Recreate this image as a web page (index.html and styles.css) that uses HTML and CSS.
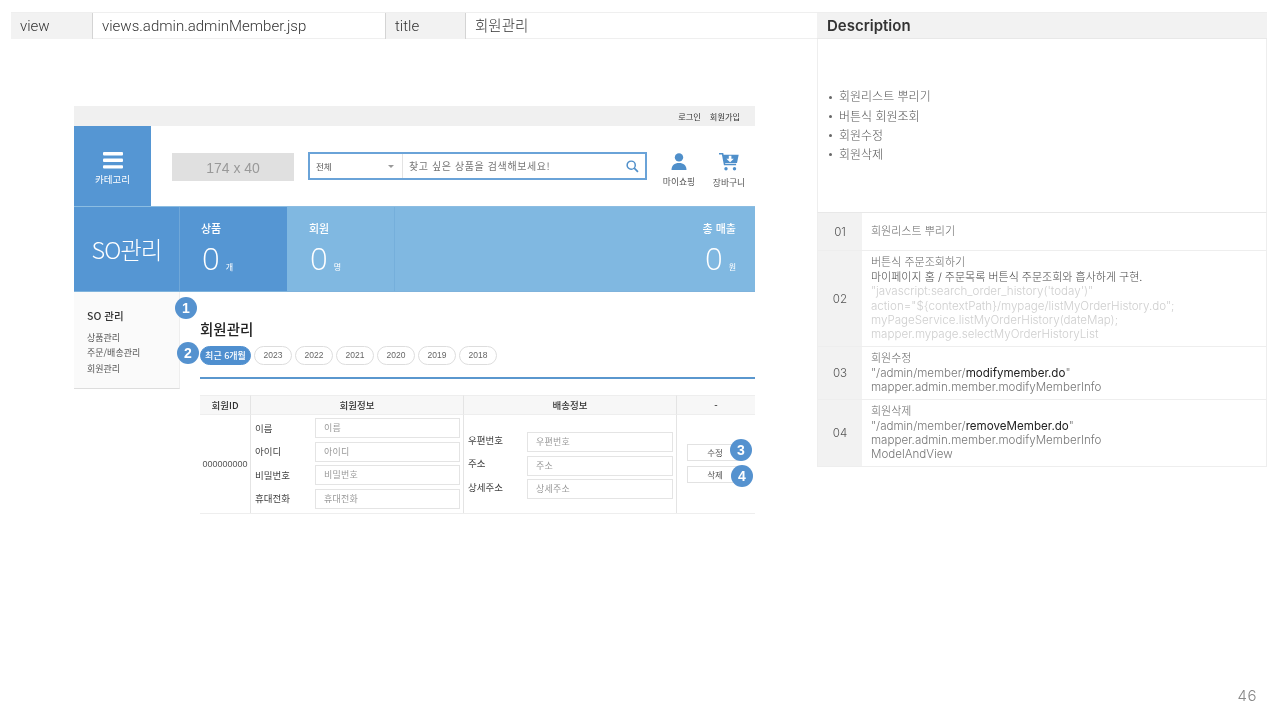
FILE: index.html
```html
<!DOCTYPE html>
<html lang="ko">
<head>
<meta charset="utf-8">
<title>회원관리</title>
<link rel="stylesheet" href="styles.css">
</head>
<body>
<div class="slide">
  <div class="columns">
    <main class="left">
      <div class="meta">
        <div class="meta-key">view</div>
        <div class="meta-val">views.admin.adminMember.jsp</div>
        <div class="meta-key">title</div>
        <div class="meta-val meta-ko">회원관리</div>
      </div>
      <section class="mock">
        <div class="topbar"><span>로그인</span><span>회원가입</span></div>
        <header class="head">
          <div class="cat">
            <svg class="burger" width="20" height="17" viewBox="0 0 20 17"><g fill="#fff"><rect width="20" height="3.4" rx="1"/><rect y="6.600" width="20" height="3.4" rx="1"/><rect y="13.200" width="20" height="3.4" rx="1"/></g></svg>
            <span>카테고리</span>
          </div>
          <div class="logo">174 x 40</div>
          <div class="search">
            <div class="sel"><span>전체</span><i class="caret"></i></div>
            <div class="query"><span>찾고 싶은 상품을 검색해보세요!</span>
              <svg width="13" height="13" viewBox="0 0 15 15"><circle cx="6" cy="6" r="4.7" fill="none" stroke="#4f8fca" stroke-width="1.7"/><path d="M9.5 9.5l4.3 4.3" stroke="#4f8fca" stroke-width="2" fill="none"/></svg>
            </div>
          </div>
          <div class="hicon hicon-my">
            <svg width="16" height="17" viewBox="0 0 16 17"><circle cx="8" cy="4.4" r="4.2" fill="#4f8fca"/><path d="M0.5 17c0-4.6 3-7 7.500-7s7.500 2.400 7.500 7z" fill="#4f8fca"/></svg>
            <span>마이쇼핑</span>
          </div>
          <div class="hicon hicon-cart">
            <svg width="20" height="18" viewBox="0 0 20 18"><path d="M0 0.800h3.600l2 10.700h11.500" fill="none" stroke="#4f8fca" stroke-width="1.600"/><path d="M3.800 1.800h15.900l-1.700 8.200H5.400z" fill="#4f8fca"/><path d="M9.800 2.800h2.600v3h2.400l-3.700 3.400-3.700-3.400h2.400z" fill="#fff"/><circle cx="7" cy="15.800" r="1.700" fill="#4f8fca"/><circle cx="15.500" cy="15.800" r="1.700" fill="#4f8fca"/></svg>
            <span>장바구니</span>
          </div>
        </header>
        <div class="stats">
          <div class="stat-title">SO관리</div>
          <div class="stat stat-dark">
            <div class="stat-label">상품</div>
            <div class="stat-num"><b>0</b><small>개</small></div>
          </div>
          <div class="stat stat-light">
            <div class="stat-label">회원</div>
            <div class="stat-num"><b>0</b><small>명</small></div>
          </div>
          <div class="stat stat-total">
            <div class="stat-label">총 매출</div>
            <div class="stat-num"><b>0</b><small>원</small></div>
          </div>
        </div>
        <div class="body">
          <aside class="side">
            <h3>SO 관리</h3>
            <ul>
              <li>상품관리</li>
              <li>주문/배송관리</li>
              <li>회원관리</li>
            </ul>
          </aside>
          <div class="content">
            <span class="badge badge-1">1</span>
            <span class="badge badge-2">2</span>
            <h2>회원관리</h2>
            <div class="tabs">
              <span class="tab on">최근 6개월</span>
              <span class="tab">2023</span>
              <span class="tab">2022</span>
              <span class="tab">2021</span>
              <span class="tab">2020</span>
              <span class="tab">2019</span>
              <span class="tab">2018</span>
            </div>
            <div class="rule"></div>
            <div class="tbl">
              <div class="th">회원ID</div>
              <div class="th">회원정보</div>
              <div class="th">배송정보</div>
              <div class="th">-</div>
              <div class="td td-id">000000000</div>
              <div class="td fields">
                <label>이름</label><div class="inp">이름</div>
                <label>아이디</label><div class="inp">아이디</div>
                <label>비밀번호</label><div class="inp">비밀번호</div>
                <label>휴대전화</label><div class="inp">휴대전화</div>
              </div>
              <div class="td fields fields-ship">
                <label>우편번호</label><div class="inp">우편번호</div>
                <label>주소</label><div class="inp">주소</div>
                <label>상세주소</label><div class="inp">상세주소</div>
              </div>
              <div class="td actions">
                <div class="btn">수정<span class="badge badge-3">3</span></div>
                <div class="btn">삭제<span class="badge badge-4">4</span></div>
              </div>
            </div>
          </div>
        </div>
      </section>
    </main>
    <aside class="right">
      <div class="desc-head">Description</div>
      <div class="desc-list">
        <ul>
          <li>회원리스트 뿌리기</li>
          <li>버튼식 회원조회</li>
          <li>회원수정</li>
          <li>회원삭제</li>
        </ul>
      </div>
      <div class="row row-1">
        <div class="no">01</div>
        <div class="txt"><span class="ko">회원리스트 뿌리기</span></div>
      </div>
      <div class="row row-2">
        <div class="no">02</div>
        <div class="txt"><span class="ko">버튼식 주문조회하기</span><br><span class="ko mid">마이페이지 홈 / 주문목록 버튼식 주문조회와 흡사하게 구현.</span><br><span class="pale">"javascript:search_order_history('today')"<br>action="${contextPath}/mypage/listMyOrderHistory.do";<br>myPageService.listMyOrderHistory(dateMap);<br>mapper.mypage.selectMyOrderHistoryList</span></div>
      </div>
      <div class="row row-3">
        <div class="no">03</div>
        <div class="txt"><span class="ko">회원수정</span><br>"/admin/member/<em>modifymember.do</em>"<br>mapper.admin.member.modifyMemberInfo</div>
      </div>
      <div class="row row-4">
        <div class="no">04</div>
        <div class="txt"><span class="ko">회원삭제</span><br>"/admin/member/<em>removeMember.do</em>"<br>mapper.admin.member.modifyMemberInfo<br>ModelAndView</div>
      </div>
    </aside>
  </div>
  <footer class="pageno">46</footer>
</div>
</body>
</html>
```

FILE: styles.css
```css
* { box-sizing: border-box; }
html, body { margin: 0; padding: 0; }
body {
  width: 1280px;
  height: 720px;
  overflow: hidden;
  background: #fff;
  font-family: "Inter", "Noto Sans CJK KR", sans-serif;
}
.slide {
  height: 720px;
  padding: 12px 13px 15px 11px;
  display: flex;
  flex-direction: column;
  filter: blur(0.3px);
}
.columns { display: flex; flex: 1; align-items: flex-start; }
.left { width: 806px; flex: none; }
.right { width: 450px; flex: none; }

/* meta bar */
.meta {
  display: grid;
  grid-template-columns: 82px 293px 80px 351px;
  height: 27px;
  font-family: "Roboto", "Noto Sans CJK KR", sans-serif;
  font-size: 15px;
  font-weight: 300;
  color: #333;
  line-height: 27px;
  border-top: 1px solid #efefef;
  border-bottom: 1px solid #efefef;
}
.meta-key { background: #f2f2f2; padding-left: 9px; border-right: 1px solid #d4d4d4; line-height: 26px; }
.meta-val { padding-left: 9px; border-right: 1px solid #d4d4d4; line-height: 26px; }
.meta-val:last-child { border-right: 0; }
.meta-ko { font-size: 14.500px; padding-top: 2px; line-height: 24px; }

/* embedded mock */
.mock {
  width: 681px;
  margin: 67px 0 0 63px;
  font-family: "Noto Sans CJK KR", sans-serif;
  color: #333;
}
.topbar {
  height: 20px;
  background: #f0f0f0;
  display: flex;
  justify-content: flex-end;
  gap: 9px;
  padding-right: 15px;
  font-size: 8.200px;
  line-height: 20px;
}
.head { height: 81px; display: flex; align-items: flex-start; border-bottom: 1px solid #8cbde2; }
.cat {
  width: 77px;
  height: 80px;
  background: #5596d3;
  color: #fff;
  font-size: 9.500px;
  display: flex;
  flex-direction: column;
  align-items: center;
  padding-top: 26px;
  gap: 3px;
}
.burger { display: block; }
.logo {
  width: 122px;
  height: 28px;
  margin: 27px 0 0 21px;
  background: #e0e0e0;
  color: #999;
  font-family: "Liberation Sans", sans-serif;
  font-size: 14px;
  line-height: 30px;
  text-align: center;
}
.search {
  width: 339px;
  height: 28px;
  margin: 26px 0 0 14px;
  border: 2px solid #6aa3d8;
  display: flex;
  font-size: 8.500px;
  color: #555;
  line-height: 24px;
}
.sel {
  width: 93px;
  padding: 0 8px 0 6px;
  border-right: 1px solid #e3e3e3;
  display: flex;
  justify-content: space-between;
  align-items: center;
}
.caret { width: 0; height: 0; border: 3px solid transparent; border-top: 3.500px solid #999; border-bottom: 0; }
.query { flex: 1; padding: 0 6px 0 6px; display: flex; justify-content: space-between; align-items: center; font-size: 10px; letter-spacing: 0.600px; color: #777; }
.hicon {
  display: flex;
  flex-direction: column;
  align-items: center;
  font-size: 8.800px;
  color: #555;
  padding-top: 27px;
  gap: 7px;
  line-height: 10px;
}
.hicon svg { display: block; }
.hicon-my { width: 40px; margin-left: 12px; }
.hicon-cart { width: 40px; margin-left: 10px; }

.stats { height: 85px; display: flex; color: #fff; border-bottom: 1px solid #7fb3dc; }
.stat-title {
  width: 106px;
  background: #5596d3;
  border-right: 1px solid #6fa7d8;
  font-size: 23.500px;
  font-weight: 300;
  line-height: 84px;
  text-align: center;
  letter-spacing: -1px;
}
.stat { padding: 13px 0 0 21px; }
.stat-dark { width: 107px; background: #5596d3; }
.stat-light { width: 108px; background: #80b8e1; border-right: 1px solid #75afdb; padding-left: 22px; }
.stat-total { flex: 1; background: #80b8e1; text-align: right; padding-right: 19px; }
.stat-label { font-size: 11px; font-weight: 500; line-height: 16px; }
.stat-num { line-height: 36px; margin-top: 4px; padding-left: 1px; }
.stat-num b { font-family: "Open Sans", sans-serif; font-size: 31px; font-weight: 300; }
.stat-num small { font-size: 8px; margin-left: 6px; }

.body { display: flex; align-items: flex-start; }
.side {
  width: 106px;
  height: 97px;
  flex: none;
  background: #fafafa;
  border-right: 1px solid #eee;
  border-bottom: 1px solid #ddd;
  padding: 17px 0 0 13px;
}
.side h3 { margin: 0 0 7px; font-size: 10.500px; font-weight: 500; line-height: 14px; color: #333; }
.side ul { margin: 0; padding: 0; list-style: none; font-size: 9px; line-height: 15.300px; color: #555; }
.content { position: relative; width: 555px; margin-left: 20px; flex: none; }
.content h2 { margin: 26px 0 0; font-size: 14.500px; font-weight: 500; line-height: 22px; color: #222; }
.tabs { display: flex; gap: 3px; margin-top: 6px; height: 19px; }
.tab {
  width: 38px;
  height: 19px;
  border: 1px solid #ddd;
  border-radius: 10px;
  font-family: "Liberation Sans", sans-serif;
  font-size: 8.500px;
  line-height: 17px;
  text-align: center;
  color: #666;
}
.tab.on {
  width: 51px;
  background: #4f8fcf;
  border-color: #4f8fcf;
  color: #fff;
  font-family: "Noto Sans CJK KR", sans-serif;
  font-weight: 500;
  font-size: 9px;
}
.rule { height: 2px; background: #5a97ce; margin-top: 12px; }
.tbl {
  margin-top: 16px;
  display: grid;
  grid-template-columns: 51px 213px 213px 78px;
  grid-template-rows: 20px 98px;
  border-bottom: 1px solid #eee;
}
.th {
  background: #f7f7f7;
  border-top: 1px solid #eee;
  border-bottom: 1px solid #eee;
  border-right: 1px solid #e4e4e4;
  font-size: 9.500px;
  font-weight: 500;
  line-height: 18px;
  text-align: center;
  color: #333;
}
.th:nth-child(4) { border-right: 0; }
.td { border-right: 1px solid #e4e4e4; }
.td-id {
  font-family: "Liberation Sans", sans-serif;
  font-size: 9px;
  line-height: 98px;
  text-align: center;
  color: #555;
}
.fields {
  display: grid;
  grid-template-columns: 60px 145px;
  grid-auto-rows: 20px;
  row-gap: 3.500px;
  padding: 3px 0 0 4px;
  align-items: center;
  font-size: 9.500px;
  color: #444;
}
.fields label { margin-top: -1px; }
.fields-ship { padding-top: 17px; grid-template-columns: 59px 146px; }
.fields-ship label { margin-top: -5px; }
.inp {
  height: 20px;
  border: 1px solid #e4e4e4;
  padding-left: 8px;
  line-height: 18px;
  font-size: 9px;
  color: #999;
  letter-spacing: 0.200px;
}
.actions { border-right: 0; padding: 29px 0 0 10px; }
.btn {
  position: relative;
  width: 56px;
  height: 17px;
  margin-bottom: 5px;
  border: 1px solid #e2e2e2;
  font-size: 8.500px;
  line-height: 14px;
  text-align: center;
  color: #555;
}
.badge {
  position: absolute;
  width: 22px;
  height: 22px;
  border-radius: 50%;
  background: #5592cf;
  color: #fff;
  font-family: "Liberation Sans", sans-serif;
  font-size: 14px;
  font-weight: 700;
  line-height: 22px;
  text-align: center;
}
.badge-1 { left: -25px; top: 5px; }
.badge-2 { left: -23px; top: 50px; }
.badge-3 { left: 42px; top: -6px; }
.badge-4 { left: 43px; top: -2px; }

/* description */
.desc-head {
  height: 27px;
  background: #f2f2f2;
  border-top: 1px solid #eee;
  border-bottom: 1px solid #e8e8e8;
  padding-left: 10px;
  font-size: 15px;
  font-weight: 600;
  line-height: 26px;
  color: #333;
}
.desc-list {
  height: 173px;
  border: 1px solid #eee;
  border-top: 0;
  border-bottom: 0;
  display: flex;
  align-items: center;
  padding-top: 1px;
  font-size: 12px;
  font-weight: 300;
  color: #555;
}
.desc-list ul { margin: 0; padding: 0 0 0 11px; list-style: none; }
.desc-list li { display: flex; align-items: center; gap: 7px; line-height: 19.300px; }
.desc-list li::before {
  content: "";
  width: 3px;
  height: 3px;
  border-radius: 50%;
  background: #666;
}
.row {
  display: flex;
  align-items: stretch;
  border: 1px solid #eee;
  border-top: 1px solid #e8e8e8;
  font-size: 11.600px;
  font-weight: 300;
  color: #777;
}
.row-1 { height: 39px; }
.row-2 { height: 96px; }
.row-3 { height: 53px; }
.row-4 { height: 67px; }
.row + .row { border-top: 0; }
.no {
  width: 44px;
  flex: none;
  background: #f2f2f2;
  color: #555;
  display: flex;
  align-items: center;
  justify-content: center;
}
.txt { padding-left: 9px; line-height: 14.400px; align-self: center; white-space: nowrap; }
.ko { font-size: 11px; color: #666; }
.ko.mid { color: #444; }
.pale { color: #cfcfcf; }
.txt em { font-style: normal; font-weight: 400; color: #222; }

.pageno {
  text-align: right;
  padding-right: 10px;
  font-size: 15px;
  font-weight: 300;
  line-height: 18px;
  color: #888;
  letter-spacing: 0.500px;
}
```
